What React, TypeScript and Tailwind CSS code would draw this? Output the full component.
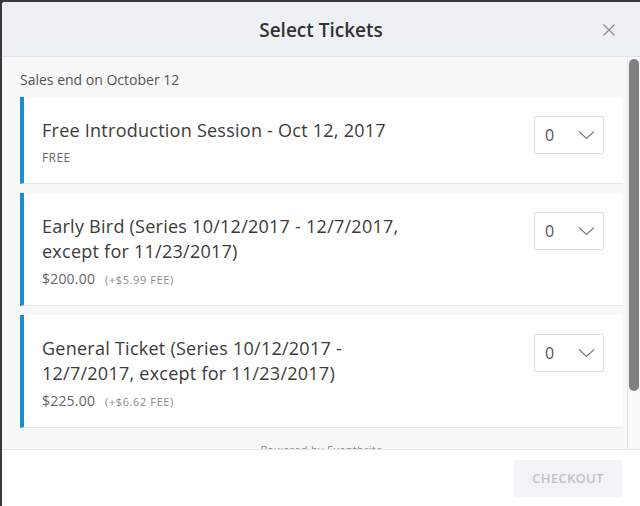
import React from "react";

type Ticket = { title: string; price: string; fee?: string };

const tickets: Ticket[] = [
  { title: "Free Introduction Session - Oct 12, 2017", price: "FREE" },
  {
    title: "Early Bird (Series 10/12/2017 - 12/7/2017, except for 11/23/2017)",
    price: "$200.00",
    fee: "(+$5.99 FEE)",
  },
  {
    title: "General Ticket (Series 10/12/2017 - 12/7/2017, except for 11/23/2017)",
    price: "$225.00",
    fee: "(+$6.62 FEE)",
  },
];

function Chevron() {
  return (
    <svg width="17" height="10" viewBox="0 0 17 10" fill="none">
      <path d="M1 1.5L8.5 8.5L16 1.5" stroke="#7a7a7a" strokeWidth="1.2" />
    </svg>
  );
}

function TicketCard({ t }: { t: Ticket }) {
  return (
    <div className="flex items-start bg-white border-l-[4px] border-l-[#1a8fd6] border-b border-b-[#e6e7e9] pl-[18px] pr-[19px] pt-[19px] pb-[15px] mb-[9px]">
      <div className="flex-1">
        <div className="max-w-[375px] pt-[2px] text-[18px] leading-[25px] tracking-[0.25px] text-[#3b3b3b]">{t.title}</div>
        <div className="mt-[5px] leading-[20px] flex items-baseline">
          {t.fee ? (
            <>
              <span className="text-[14px] tracking-[0.2px] text-[#666]">{t.price}</span>
              <span className="ml-[10px] text-[11px] tracking-[0.6px] text-[#8a8a8a]">{t.fee}</span>
            </>
          ) : (
            <span className="text-[12px] tracking-[0.4px] text-[#666]">{t.price}</span>
          )}
        </div>
      </div>
      <div className="w-[70px] h-[38px] border border-[#dcdde0] rounded-[2px] flex items-center justify-between pl-[10px] pr-[8px] bg-white">
        <span className="text-[16px] text-[#555]">0</span>
        <Chevron />
      </div>
    </div>
  );
}

export default function App() {
  return (
    <div
      className="w-[640px] h-[506px] bg-[#3a3a3a] pl-[2px] pt-[2px] overflow-hidden"
      style={{ fontFamily: '"Open Sans", "Liberation Sans", sans-serif' }}
    >
      <div className="w-[638px] h-[504px] bg-white rounded-tl-[3px] flex flex-col overflow-hidden">
        <div className="h-[55px] shrink-0 bg-[#eef1f4] border-b border-[#dfe2e6] flex items-center justify-center relative">
          <span className="text-[19px] font-semibold text-[#333] pt-[2px]">Select Tickets</span>
          <svg className="absolute right-[25px] top-[22px]" width="12" height="12" viewBox="0 0 12 12" fill="none">
            <path d="M0.5 0.5L11.5 11.5M11.5 0.5L0.5 11.5" stroke="#8a8a8a" strokeWidth="1.1" />
          </svg>
        </div>
        <div className="h-[393px] shrink-0 flex bg-[#f8f8f9] border-b border-[#e3e5e8]">
          <div className="flex-1 overflow-hidden pl-[18px] pr-[4px]">
            <div className="h-[40px] pt-[14px] text-[14px] leading-[18px] text-[#555]">Sales end on October 12</div>
            {tickets.map((t, i) => (
              <TicketCard key={i} t={t} />
            ))}
            <div className="pt-[5px] text-center text-[11px] leading-[16px] tracking-[0.3px] text-[#888]">Powered by Eventbrite</div>
          </div>
          <div className="w-[13px] shrink-0 border-l border-[#e4e5e7] bg-[#f9f9f9] pt-[2px] pl-[1px]">
            <div className="w-[10px] h-[332px] rounded-[5px] bg-[#7f7f7f]" />
          </div>
        </div>
        <div className="flex-1 bg-white flex items-start justify-end pt-[10px] pr-[18px]">
          <div className="w-[108px] h-[37px] rounded-[2px] bg-[#f2f3f5] flex items-center justify-center text-[13px] font-semibold text-[#bfc2c7] tracking-[0.3px]">
            CHECKOUT
          </div>
        </div>
      </div>
    </div>
  );
}
